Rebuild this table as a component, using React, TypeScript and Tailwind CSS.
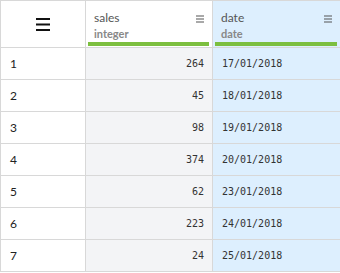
const rows = [
  { sales: 264, date: "17/01/2018" },
  { sales: 45, date: "18/01/2018" },
  { sales: 98, date: "19/01/2018" },
  { sales: 374, date: "20/01/2018" },
  { sales: 62, date: "23/01/2018" },
  { sales: 223, date: "24/01/2018" },
  { sales: 24, date: "25/01/2018" },
];

const MenuIcon = () => (
  <svg width="8" height="8" viewBox="0 0 8 8" className="text-[#555]">
    <rect x="0" y="0.5" width="8" height="1" fill="currentColor" />
    <rect x="0" y="3.5" width="8" height="1" fill="currentColor" />
    <rect x="0" y="6.5" width="8" height="1" fill="currentColor" />
  </svg>
);

const HeaderCell = ({ name, type, blue }: { name: string; type: string; blue?: boolean }) => (
  <div
    className={`relative h-[47px] border-r border-b border-[#d8d8d8] px-[8px] pt-[9px] ${
      blue ? "bg-[#ddeffe]" : "bg-white"
    }`}
  >
    <div className="flex items-start justify-between">
      <span className="text-[12px] leading-[16px] text-[#555]">{name}</span>
      <span className="mt-[5px]">
        <MenuIcon />
      </span>
    </div>
    <div className="mt-[1px] text-[11px] leading-[14px] font-bold text-[#888]">{type}</div>
    <div className="absolute left-[2px] right-[3px] bottom-[1px] h-[4px] bg-[#7cbf3f]" />
  </div>
);

export default function App() {
  return (
    <div className="w-[340px] h-[273px] overflow-hidden bg-white font-['Lato',sans-serif]">
      <div className="grid grid-cols-[85px_127px_128px] border-t border-l border-[#d8d8d8]">
        <div className="flex h-[47px] items-center justify-center border-r border-b border-[#d8d8d8]">
          <svg width="14" height="13" viewBox="0 0 14 13">
            <rect x="0" y="0" width="14" height="2" fill="#111" />
            <rect x="0" y="5.5" width="14" height="2" fill="#111" />
            <rect x="0" y="11" width="14" height="2" fill="#111" />
          </svg>
        </div>
        <HeaderCell name="sales" type="integer" />
        <HeaderCell name="date" type="date" blue />
        {rows.map((r, i) => (
          <div key={i} className="contents">
            <div className="flex h-[32px] items-center border-r border-b border-[#d8d8d8] pl-[9px] text-[12px] text-[#222]">
              {i + 1}
            </div>
            <div className="flex h-[32px] items-center justify-end border-r border-b border-[#d8d8d8] bg-[#f3f4f6] pr-[8px] font-['DejaVu_Sans_Mono',monospace] text-[10px] text-[#333]">
              {r.sales}
            </div>
            <div className="flex h-[32px] items-center border-r border-b border-[#d8d8d8] bg-[#ddeffe] pl-[9px] font-['DejaVu_Sans_Mono',monospace] text-[10px] text-[#333]">
              {r.date}
            </div>
          </div>
        ))}
      </div>
    </div>
  );
}
